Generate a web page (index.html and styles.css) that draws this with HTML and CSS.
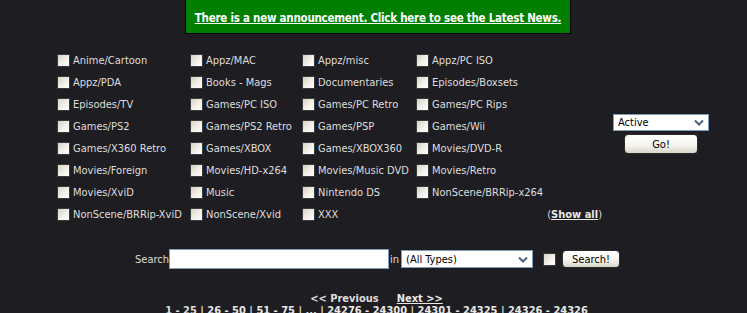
FILE: index.html
```html
<!DOCTYPE html>
<html>
<head>
<meta charset="utf-8">
<link rel="stylesheet" href="styles.css">
</head>
<body>
<div class="banner"><a href="#">There is a new announcement. Click here to see the Latest News.</a></div>

<form class="browse">
  <div class="cats">
    <div class="grid">
      <label><input type="checkbox">Anime/Cartoon</label>
      <label><input type="checkbox">Appz/MAC</label>
      <label><input type="checkbox">Appz/misc</label>
      <label><input type="checkbox">Appz/PC ISO</label>
      <label><input type="checkbox">Appz/PDA</label>
      <label><input type="checkbox">Books - Mags</label>
      <label><input type="checkbox">Documentaries</label>
      <label><input type="checkbox">Episodes/Boxsets</label>
      <label><input type="checkbox">Episodes/TV</label>
      <label><input type="checkbox">Games/PC ISO</label>
      <label><input type="checkbox">Games/PC Retro</label>
      <label><input type="checkbox">Games/PC Rips</label>
      <label><input type="checkbox">Games/PS2</label>
      <label><input type="checkbox">Games/PS2 Retro</label>
      <label><input type="checkbox">Games/PSP</label>
      <label><input type="checkbox">Games/Wii</label>
      <label><input type="checkbox">Games/X360 Retro</label>
      <label><input type="checkbox">Games/XBOX</label>
      <label><input type="checkbox">Games/XBOX360</label>
      <label><input type="checkbox">Movies/DVD-R</label>
      <label><input type="checkbox">Movies/Foreign</label>
      <label><input type="checkbox">Movies/HD-x264</label>
      <label><input type="checkbox">Movies/Music DVD</label>
      <label><input type="checkbox">Movies/Retro</label>
      <label><input type="checkbox">Movies/XviD</label>
      <label><input type="checkbox">Music</label>
      <label><input type="checkbox">Nintendo DS</label>
      <label><input type="checkbox">NonScene/BRRip-x264</label>
      <label><input type="checkbox">NonScene/BRRip-XviD</label>
      <label><input type="checkbox">NonScene/Xvid</label>
      <label><input type="checkbox">XXX</label>
      <div class="showall">(<a href="#">Show all</a>)</div>
    </div>
    <div class="status">
      <div class="sel sel-status"><span>Active</span><svg width="10" height="7" viewBox="0 0 10 7"><path d="M1 1.5 L5 5.5 L9 1.5" fill="none" stroke="#4d6185" stroke-width="2"/></svg></div>
      <button type="button" class="btn go">Go!</button>
    </div>
  </div>

  <div class="search">
    <span class="lbl">Search</span><input type="text" class="txt"><span class="lbl in">in</span><div class="sel sel-types"><span>(All Types)</span><svg width="10" height="7" viewBox="0 0 10 7"><path d="M1 1.5 L5 5.5 L9 1.5" fill="none" stroke="#4d6185" stroke-width="2"/></svg></div><input type="checkbox" class="dead"><button type="button" class="btn srch">Search!</button>
  </div>
</form>

<div class="pager">
  <div class="pn"><span class="prev">&lt;&lt;&nbsp;Previous</span><a href="#">Next&nbsp;&gt;&gt;</a></div>
  <div class="pages"><b>1&nbsp;-&nbsp;25</b> | <a href="#">26&nbsp;-&nbsp;50</a> | <a href="#">51&nbsp;-&nbsp;75</a> | ... | <a href="#">24276&nbsp;-&nbsp;24300</a> | <a href="#">24301&nbsp;-&nbsp;24325</a> | <a href="#">24326&nbsp;-&nbsp;24326</a></div>
</div>
</body>
</html>
```
FILE: styles.css
```css
html, body {
  margin: 0;
  padding: 0;
  background: #1e1d22;
  color: #dedede;
  font-family: "DejaVu Sans Condensed", "DejaVu Sans", sans-serif;
  font-size: 11px;
  overflow: hidden;
}

a { color: #e8e8e8; }

.banner {
  width: 384px;
  height: 33px;
  margin: 0 0 0 185px;
  background: #008000;
  border: 1px solid #000;
  border-top: none;
  display: flex;
  align-items: center;
  justify-content: center;
}
.banner a {
  color: #fff;
  font-weight: bold;
  font-size: 11.5px;
  letter-spacing: -0.25px;
  white-space: nowrap;
  text-decoration: underline;
  padding-top: 3px;
}

.browse { margin: 0; }

.cats {
  display: flex;
  align-items: center;
  margin-top: 15px;
  padding-left: 57px;
}

.grid {
  display: grid;
  grid-template-columns: 133px 112px 114px 186px;
  grid-auto-rows: 22px;
}

.grid label {
  display: flex;
  align-items: center;
  white-space: nowrap;
  height: 22px;
}

input[type=checkbox] {
  -webkit-appearance: none;
  appearance: none;
  width: 13px;
  height: 13px;
  margin: 0 3px 0 0;
  border: 1px solid #3a3a3a;
  background: linear-gradient(135deg, #d6d2c6 0%, #f2f0ea 55%, #ffffff 100%);
  flex: none;
  box-sizing: border-box;
}

.showall {
  display: flex;
  align-items: center;
  justify-content: flex-end;
}
.showall a { font-weight: bold; }

.status {
  margin-left: 11px;
  display: flex;
  flex-direction: column;
  align-items: center;
  gap: 3px;
  padding-bottom: 6px;
}

.sel {
  box-sizing: border-box;
  background: #fff;
  border: 1px solid #7f9db9;
  color: #000;
  display: flex;
  align-items: center;
  justify-content: space-between;
  padding: 0 4px 0 4px;
  font-family: "DejaVu Sans Condensed", sans-serif;
  font-size: 11px;
  flex: none;
}
.sel-status { width: 96px; height: 17px; }
.sel-types { width: 132px; height: 18px; }

.btn {
  box-sizing: border-box;
  font-family: "DejaVu Sans Condensed", sans-serif;
  font-size: 11px;
  color: #000;
  border: 1px solid #2b2b2b;
  border-radius: 4px;
  background: linear-gradient(180deg, #ffffff 0%, #f4f3ee 60%, #d8d4c8 100%);
  padding: 0;
  flex: none;
}
.go { width: 74px; height: 20px; }
.srch { width: 58px; height: 18px; }

.search {
  display: flex;
  align-items: center;
  margin-top: 24px;
  padding-left: 135px;
  height: 20px;
}
.txt {
  box-sizing: border-box;
  width: 220px;
  height: 20px;
  margin: 0 1px 0 0;
  border: 1px solid #7f9db9;
  background: #fff;
  padding: 0;
  flex: none;
}
.in { margin-right: 2px; }
.search .dead { margin: 0 6px 0 10px; }

.pager {
  text-align: center;
  margin-top: 24px;
  font-weight: bold;
  line-height: 12px;
  padding-left: 6px;
}
.pn .prev { margin-right: 18px; }
.pages a { color: #e8e8e8; }
```
